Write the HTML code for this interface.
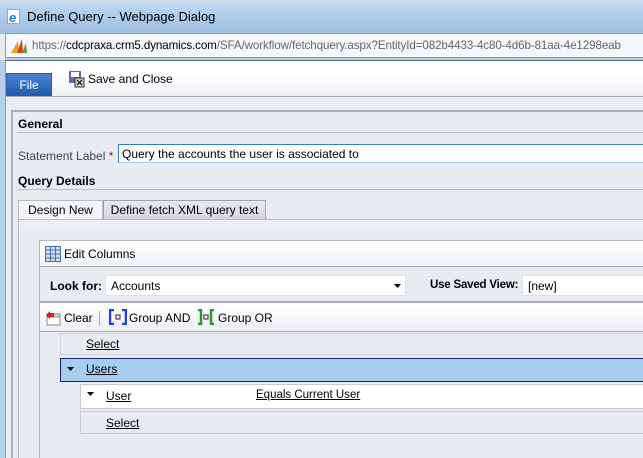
<!DOCTYPE html>
<html><head><style>
*{margin:0;padding:0;box-sizing:border-box}
html,body{width:643px;height:458px;overflow:hidden}
body{font-family:"Liberation Sans",sans-serif;font-size:11px;color:#000;background:#e8ebf0;position:relative}
.a{position:absolute}
u{text-decoration:underline}
</style></head><body>
<div class="a" style="left:0;top:0;width:643px;height:34px;background:linear-gradient(#c5daf0,#a9c8e8 60%,#9fc0e4)"></div>
<div class="a" style="left:0;top:0;width:643px;height:3px;background:#cfdceb"></div>
<div class="a" style="top:9px;left:7px;width:13px;height:15px;background:#fff;border:1px solid #9ab"></div>
<div class="a" style="left:9px;top:10px;color:#2a7ad0;font-weight:bold;font-size:13px;font-style:italic">e</div>
<div class="a" style="left:27px;top:9px;font-size:13px;color:#000">Define Query -- Webpage Dialog</div>
<div class="a" style="left:5px;top:33px;width:638px;height:25px;background:#f4f7fb;border:1px solid #8a9bb0;border-right:none;overflow:hidden">
<div class="a" style="left:26px;top:5px;font-size:11.6px;color:#666;white-space:nowrap;letter-spacing:-0.1px">https://<span style="color:#000">cdcpraxa.crm5.dynamics.com</span>/SFA/workflow/fetchquery.aspx?EntityId=082b4433-4c80-4d6b-81aa-4e1298eab</div>
</div>
<svg class="a" style="left:10px;top:38px" width="18" height="16"><path d="M1 15 L8 3 L9 15Z" fill="#e8a020"/><path d="M7 15 L12 1 L13 15Z" fill="#d04020"/><path d="M12 15 L16 5 L17 15Z" fill="#6a9a30"/></svg>
<div class="a" style="left:5px;top:58px;width:638px;height:2px;background:#b7cde3"></div>
<div class="a" style="left:5px;top:60px;width:638px;height:37px;background:linear-gradient(#fff,#fff 40%,#eef1f5);border-left:1px solid #8a9bb0;border-top:1px solid #5a6a80"></div>
<div class="a" style="left:6px;top:73px;width:46px;height:24px;background:linear-gradient(#4b85d0,#1f5aab);border:1px solid #2b5ea5;color:#fff;font-size:12px;text-align:center;line-height:22px">File</div>
<svg class="a" style="left:68px;top:70px" width="18" height="18"><rect x="1" y="1" width="12" height="12" fill="#5b6e9a"/><rect x="3" y="2" width="8" height="5" fill="#fff"/><rect x="7" y="8" width="9" height="9" fill="#ccc" stroke="#333"/><path d="M9 10l5 5M14 10l-5 5" stroke="#000"/></svg>
<div class="a" style="left:88px;top:72px;font-size:12px">Save and Close</div>
<div class="a" style="left:5px;top:96px;width:638px;height:1px;background:#a8adb5"></div>
<div class="a" style="left:5px;top:97px;width:1px;height:361px;background:#8a9bb0"></div>
<div class="a" style="left:0;top:60px;width:5px;height:398px;background:#b6d0ea"></div>
<div class="a" style="left:11px;top:110px;width:632px;height:2px;background:#aaaeb4"></div>
<div class="a" style="left:11px;top:110px;width:2px;height:348px;background:#aaaeb4"></div>
<div class="a" style="left:18px;top:117px;font-weight:bold;font-size:12px">General</div>
<div class="a" style="left:17px;top:132px;width:626px;height:1px;background:#b8bcc2"></div>
<div class="a" style="left:18px;top:149px;font-size:12px;color:#444">Statement Label <span style="color:#c00">*</span></div>
<div class="a" style="left:118px;top:144px;width:525px;height:19px;background:#fff;border:1px solid #3a7bbf;border-bottom-color:#a6cbe8;border-right:none;font-size:12px;padding:2px 0 0 3px">Query the accounts the user is associated to</div>
<div class="a" style="left:18px;top:174px;font-weight:bold;font-size:12px">Query Details</div>
<div class="a" style="left:17px;top:189px;width:626px;height:1px;background:#b8bcc2"></div>
<div class="a" style="left:18px;top:200px;width:85px;height:20px;background:#f2f4f7;border:1px solid #b8bcc2;border-bottom:none;font-size:12px;text-align:center;line-height:19px">Design New</div>
<div class="a" style="left:103px;top:200px;width:163px;height:20px;background:linear-gradient(#e8eaed,#d4d7dc);border:1px solid #a0a4aa;border-bottom:none;font-size:12px;text-align:center;line-height:19px">Define fetch XML query text</div>
<div class="a" style="left:18px;top:219px;width:625px;height:1px;background:#b8bcc2"></div>
<div class="a" style="left:18px;top:219px;width:1px;height:239px;background:#b8bcc2"></div>
<div class="a" style="left:19px;top:220px;width:624px;height:10px;background:#eceef2"></div>
<div class="a" style="left:39px;top:240px;width:604px;height:218px;border-left:1px solid #b8bcc2;border-top:1px solid #b8bcc2"></div>
<div class="a" style="left:40px;top:241px;width:603px;height:25px;background:linear-gradient(#fff,#f0f2f5)"></div>
<svg class="a" style="left:45px;top:246px" width="16" height="16"><rect x="0.5" y="0.5" width="15" height="15" fill="#cfe0f5" stroke="#4a6ea8"/><path d="M0 4h16M5.5 0v16M10.5 0v16M0 8h16M0 12h16" stroke="#4a6ea8"/></svg>
<div class="a" style="left:64px;top:247px;font-size:12px">Edit Columns</div>
<div class="a" style="left:40px;top:266px;width:603px;height:1px;background:#a8acb2"></div>
<div class="a" style="left:50px;top:279px;font-size:12px;font-weight:bold">Look for:</div>
<div class="a" style="left:105px;top:275px;width:301px;height:21px;background:#fff;border:1px solid #dde0e4;font-size:12px;padding:3px 0 0 5px">Accounts</div>
<svg class="a" style="left:394px;top:284px" width="8" height="5"><path d="M0 0h7l-3.5 4z"/></svg>
<div class="a" style="left:430px;top:279px;font-size:11.5px;font-weight:bold;letter-spacing:-0.2px;white-space:nowrap">Use Saved View:</div>
<div class="a" style="left:522px;top:275px;width:121px;height:21px;background:#fff;border:1px solid #dde0e4;border-right:none;font-size:12px;padding:3px 0 0 5px">[new]</div>
<div class="a" style="left:40px;top:301px;width:603px;height:2px;background:#a8acb2"></div>
<div class="a" style="left:40px;top:303px;width:603px;height:28px;background:linear-gradient(#fff,#eceef2)"></div>
<svg class="a" style="left:45px;top:310px" width="16" height="16"><rect x="2" y="4" width="13" height="11" fill="#fff" stroke="#888"/><rect x="2" y="4" width="13" height="3" fill="#ddd" stroke="#888"/><path d="M1 5l4-4v2h4v4h-4v2z" fill="#d02020"/></svg>
<div class="a" style="left:64px;top:311px;font-size:12px">Clear</div>
<div class="a" style="left:99px;top:311px;width:1px;height:14px;background:#aaa"></div>
<svg class="a" style="left:109px;top:309px" width="18" height="16"><path d="M5 1H1v14h4M13 1h4v14h-4" fill="none" stroke="#2a3ee0" stroke-width="2.5"/><rect x="7" y="6" width="4" height="4" fill="#fff" stroke="#222"/></svg>
<div class="a" style="left:129px;top:311px;font-size:12px">Group AND</div>
<svg class="a" style="left:197px;top:309px" width="18" height="16"><path d="M1 1h3v14h-3M17 1h-3v14h3" fill="none" stroke="#2a9a2a" stroke-width="2.5"/><rect x="7" y="6" width="4" height="4" fill="#fff" stroke="#222"/></svg>
<div class="a" style="left:218px;top:311px;font-size:12px">Group OR</div>
<div class="a" style="left:40px;top:331px;width:603px;height:1px;background:#a8acb2"></div>
<div class="a" style="left:60px;top:333px;width:583px;height:22px;border:1px solid #d0d3d8;border-right:none"></div>
<div class="a" style="left:86px;top:337px;font-size:12px"><u>Select</u></div>
<div class="a" style="left:60px;top:358px;width:583px;height:24px;background:#a8ccee;border:1px solid #1a2470;border-right:none"></div>
<svg class="a" style="left:67px;top:367px" width="8" height="5"><path d="M0 0h7l-3.5 4z"/></svg>
<div class="a" style="left:86px;top:362px;font-size:12px"><u>Users</u></div>
<div class="a" style="left:80px;top:384px;width:563px;height:25px;background:#fff;border:1px solid #c8cbd0;border-right:none"></div>
<svg class="a" style="left:87px;top:392px" width="8" height="5"><path d="M0 0h7l-3.5 4z"/></svg>
<div class="a" style="left:106px;top:389px;font-size:12px"><u>User</u></div>
<div class="a" style="left:256px;top:389px;font-size:11.5px"><u>Equals Current User</u></div>
<div class="a" style="left:80px;top:411px;width:563px;height:23px;border:1px solid #c8cbd0;border-right:none"></div>
<div class="a" style="left:106px;top:416px;font-size:12px"><u>Select</u></div>
</body></html>
